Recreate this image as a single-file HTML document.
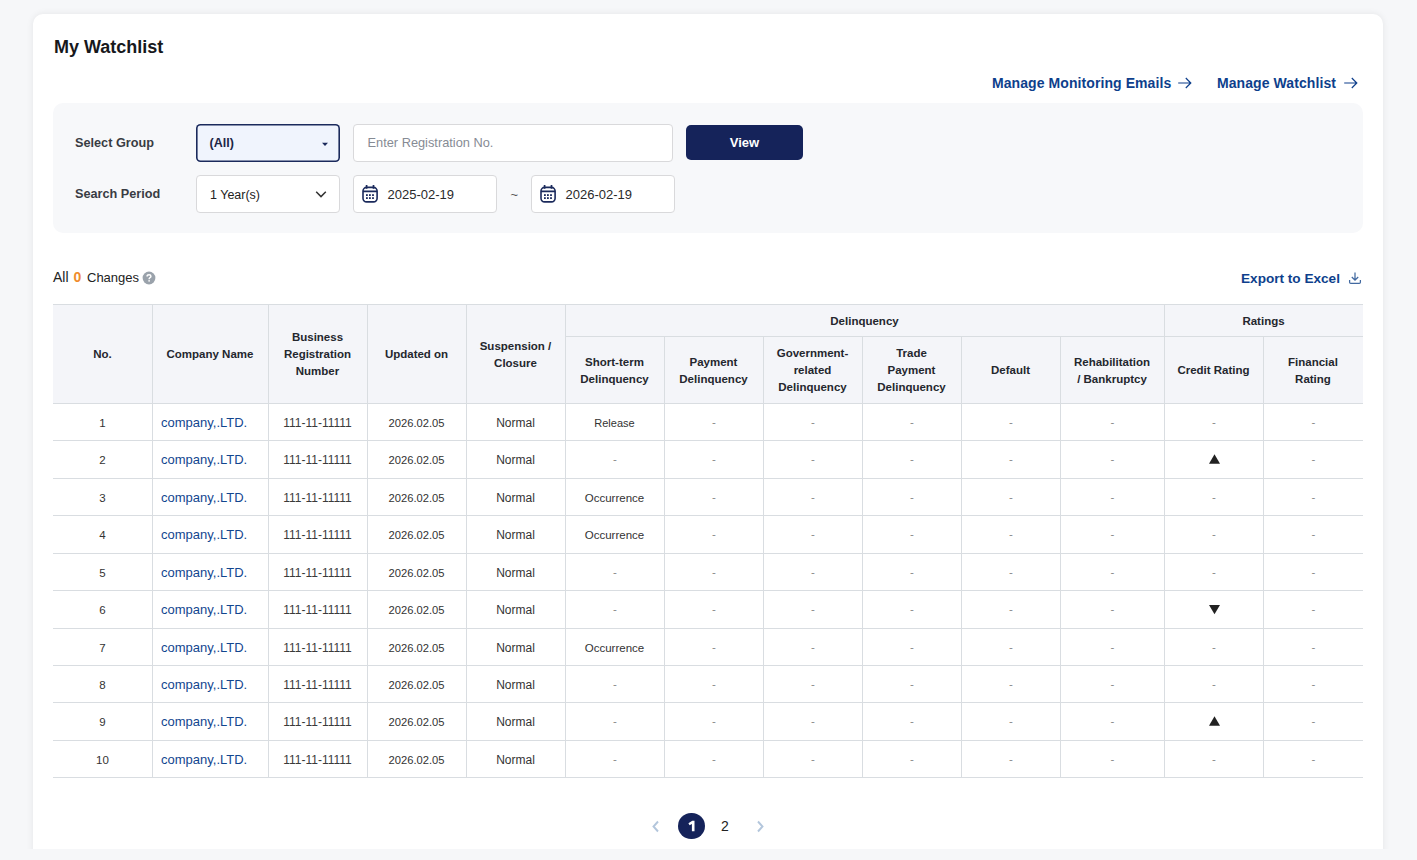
<!DOCTYPE html>
<html><head><meta charset="utf-8"><style>
*{margin:0;padding:0;box-sizing:border-box}
html,body{width:1417px;height:860px;overflow:hidden;background:#f6f7f9;font-family:"Liberation Sans", sans-serif;}
.clip{position:absolute;left:0;top:0;width:1417px;height:849px;overflow:hidden}
.card{position:absolute;left:33px;top:14px;width:1350px;height:900px;background:#fff;border-radius:10px;box-shadow:0 0 7px rgba(0,0,0,0.08)}
.abs{position:absolute;white-space:nowrap}
.panel{position:absolute;left:53px;top:103px;width:1310px;height:130px;background:#f7f8fa;border-radius:10px}
.box{position:absolute;background:#fff;border:1px solid #d9d9db;border-radius:4px}
.sel{position:absolute;background:#f0f4fd;box-shadow:inset 0 0 0 1.6px #1b2a5c;border-radius:4.5px}
.btn{position:absolute;background:#15235a;border-radius:5px}
.hl{position:absolute;height:1px;background:#d9dde1}
.vl{position:absolute;width:1px;background:#d9dde1}
.cell{position:absolute;display:flex;align-items:center;justify-content:center;text-align:center;white-space:nowrap}
.th{font-size:11.5px;font-weight:bold;color:#24272e;line-height:17px;padding-top:2px}
.td{font-size:11.5px;color:#333;line-height:14px;padding-top:2px}
.dash{color:#888;padding-top:0;padding-left:1px}
.co{justify-content:flex-start;padding-left:9px;color:#12468f;font-size:13px}
</style></head><body>
<div class="clip"><div class="card"></div><div class="abs" style="left:54px;top:36.26px;font-size:18px;line-height:23px;color:#17181c;font-weight:bold;">My Watchlist</div><div class="abs" style="left:992px;top:74.15px;font-size:14px;line-height:18px;color:#0e3f8c;font-weight:bold;letter-spacing:0.08px">Manage Monitoring Emails</div><svg class="abs" width="16" height="12" viewBox="0 0 16 12" style="left:1177px;top:77px"><path d="M1.2 6H13.8M8.8 1L13.8 6L8.8 11" fill="none" stroke="#0e3f8c" stroke-width="1.2"/></svg><div class="abs" style="left:1217px;top:74.15px;font-size:14px;line-height:18px;color:#0e3f8c;font-weight:bold;letter-spacing:0.08px">Manage Watchlist</div><svg class="abs" width="16" height="12" viewBox="0 0 16 12" style="left:1343px;top:77px"><path d="M1.2 6H13.8M8.8 1L13.8 6L8.8 11" fill="none" stroke="#0e3f8c" stroke-width="1.2"/></svg><div class="panel"></div><div class="abs" style="left:75px;top:135.10px;font-size:12.7px;line-height:17px;color:#393c43;font-weight:bold;">Select Group</div><div class="abs" style="left:75px;top:185.70px;font-size:12.7px;line-height:17px;color:#393c43;font-weight:bold;">Search Period</div><div class="sel" style="left:196px;top:124px;width:144px;height:38px"></div><div class="abs" style="left:209.5px;top:134.67px;font-size:12.5px;line-height:16px;color:#1d2546;font-weight:bold;">(All)</div><svg class="abs" style="left:321px;top:142px" width="8" height="5" viewBox="0 0 8 5"><path d="M1 0.8H7L4 4Z" fill="#1b2a5c"/></svg><div class="box" style="left:353px;top:124px;width:320px;height:38px"></div><div class="abs" style="left:367.5px;top:134.06px;font-size:12.8px;line-height:17px;color:#868b94;font-weight:normal;">Enter Registration No.</div><div class="btn" style="left:686px;top:125px;width:117px;height:35px"></div><div class="abs" style="left:686px;top:134.30px;font-size:13px;line-height:17px;color:#fff;font-weight:bold;width:117px;text-align:center">View</div><div class="box" style="left:196px;top:175px;width:144px;height:38px"></div><div class="abs" style="left:210px;top:186.97px;font-size:12.5px;line-height:16px;color:#222;font-weight:normal;">1 Year(s)</div><svg class="abs" style="left:315px;top:190px" width="12" height="8" viewBox="0 0 12 8"><path d="M1.2 1.8L6 6.6L10.8 1.8" fill="none" stroke="#333" stroke-width="1.5"/></svg><div class="box" style="left:353px;top:175px;width:144px;height:38px"></div><svg class="abs" style="left:361px;top:184px" width="18" height="20" viewBox="0 0 18 20"><rect x="2" y="3.4" width="14.1" height="14.5" rx="3.6" fill="none" stroke="#1b2a5c" stroke-width="1.6"/><path d="M2 7.4H16.1M5.6 1V4.8M12.5 1V4.8" stroke="#1b2a5c" stroke-width="1.7" fill="none"/><g fill="#1b2a5c"><rect x="5" y="10.2" width="1.8" height="1.8"/><rect x="8" y="10.2" width="1.8" height="1.8"/><rect x="11.1" y="10.2" width="1.8" height="1.8"/><rect x="5" y="13.2" width="1.8" height="1.8"/><rect x="8" y="13.2" width="1.8" height="1.8"/><rect x="11.1" y="13.2" width="1.8" height="1.8"/></g></svg><div class="abs" style="left:387.5px;top:186.20px;font-size:13px;line-height:17px;color:#2a2a2a;font-weight:normal;">2025-02-19</div><div class="abs" style="left:510.5px;top:186.00px;font-size:13px;line-height:17px;color:#555;font-weight:normal;">~</div><div class="box" style="left:531px;top:175px;width:144px;height:38px"></div><svg class="abs" style="left:539px;top:184px" width="18" height="20" viewBox="0 0 18 20"><rect x="2" y="3.4" width="14.1" height="14.5" rx="3.6" fill="none" stroke="#1b2a5c" stroke-width="1.6"/><path d="M2 7.4H16.1M5.6 1V4.8M12.5 1V4.8" stroke="#1b2a5c" stroke-width="1.7" fill="none"/><g fill="#1b2a5c"><rect x="5" y="10.2" width="1.8" height="1.8"/><rect x="8" y="10.2" width="1.8" height="1.8"/><rect x="11.1" y="10.2" width="1.8" height="1.8"/><rect x="5" y="13.2" width="1.8" height="1.8"/><rect x="8" y="13.2" width="1.8" height="1.8"/><rect x="11.1" y="13.2" width="1.8" height="1.8"/></g></svg><div class="abs" style="left:565.5px;top:186.20px;font-size:13px;line-height:17px;color:#2a2a2a;font-weight:normal;">2026-02-19</div><div class="abs" style="left:53px;top:268.15px;font-size:14px;line-height:18px;color:#222;font-weight:normal;">All</div><div class="abs" style="left:73.5px;top:268.15px;font-size:14px;line-height:18px;color:#f08c2c;font-weight:bold;">0</div><div class="abs" style="left:87px;top:269.30px;font-size:13px;line-height:17px;color:#222;font-weight:normal;">Changes</div><svg class="abs" style="left:142px;top:270.5px" width="14" height="14" viewBox="0 0 14 14"><circle cx="7" cy="7" r="6.4" fill="#9aa2ab"/><path d="M5.1 5.4Q5.1 3.8 7.1 3.8Q8.9 3.8 8.9 5.3Q8.9 6.2 8 6.7Q7.1 7.2 7.1 8.2" fill="none" stroke="#fff" stroke-width="1.5"/><circle cx="7.1" cy="9.8" r="0.85" fill="#fff"/></svg><div class="abs" style="left:1241px;top:270.49px;font-size:13.6px;line-height:18px;color:#0e3f8c;font-weight:bold;">Export to Excel</div><svg class="abs" style="left:1348px;top:271px" width="14" height="14" viewBox="0 0 14 14"><path d="M7 1.5V9M3.8 6L7 9.2L10.2 6M1.6 9V11.2Q1.6 12.4 2.8 12.4H11.2Q12.4 12.4 12.4 11.2V9" fill="none" stroke="#4269a0" stroke-width="1.25"/></svg><div class="abs" style="left:53px;top:304px;width:1310px;height:99px;background:#f4f5f9"></div><div class="hl" style="left:53px;top:304px;width:1310px"></div><div class="hl" style="left:53px;top:403px;width:1310px"></div><div class="hl" style="left:53px;top:440px;width:1310px"></div><div class="hl" style="left:53px;top:478px;width:1310px"></div><div class="hl" style="left:53px;top:515px;width:1310px"></div><div class="hl" style="left:53px;top:553px;width:1310px"></div><div class="hl" style="left:53px;top:590px;width:1310px"></div><div class="hl" style="left:53px;top:628px;width:1310px"></div><div class="hl" style="left:53px;top:665px;width:1310px"></div><div class="hl" style="left:53px;top:702px;width:1310px"></div><div class="hl" style="left:53px;top:740px;width:1310px"></div><div class="hl" style="left:53px;top:777px;width:1310px"></div><div class="hl" style="left:565px;top:336px;width:798px"></div><div class="vl" style="left:152px;top:304px;height:473px"></div><div class="vl" style="left:268px;top:304px;height:473px"></div><div class="vl" style="left:367px;top:304px;height:473px"></div><div class="vl" style="left:466px;top:304px;height:473px"></div><div class="vl" style="left:565px;top:304px;height:473px"></div><div class="vl" style="left:664px;top:336px;height:441px"></div><div class="vl" style="left:763px;top:336px;height:441px"></div><div class="vl" style="left:862px;top:336px;height:441px"></div><div class="vl" style="left:961px;top:336px;height:441px"></div><div class="vl" style="left:1060px;top:336px;height:441px"></div><div class="vl" style="left:1164px;top:304px;height:473px"></div><div class="vl" style="left:1263px;top:336px;height:441px"></div><div class="cell th" style="left:53px;top:304px;width:99px;height:99px;">No.</div><div class="cell th" style="left:152px;top:304px;width:116px;height:99px;">Company Name</div><div class="cell th" style="left:268px;top:304px;width:99px;height:99px;">Business<br>Registration<br>Number</div><div class="cell th" style="left:367px;top:304px;width:99px;height:99px;">Updated on</div><div class="cell th" style="left:466px;top:304px;width:99px;height:99px;">Suspension /<br>Closure</div><div class="cell th" style="left:565px;top:304px;width:599px;height:32px;">Delinquency</div><div class="cell th" style="left:1164px;top:304px;width:199px;height:32px;">Ratings</div><div class="cell th" style="left:565px;top:336px;width:99px;height:67px;">Short-term<br>Delinquency</div><div class="cell th" style="left:664px;top:336px;width:99px;height:67px;">Payment<br>Delinquency</div><div class="cell th" style="left:763px;top:336px;width:99px;height:67px;">Government-<br>related<br>Delinquency</div><div class="cell th" style="left:862px;top:336px;width:99px;height:67px;">Trade<br>Payment<br>Delinquency</div><div class="cell th" style="left:961px;top:336px;width:99px;height:67px;">Default</div><div class="cell th" style="left:1060px;top:336px;width:104px;height:67px;">Rehabilitation<br>/ Bankruptcy</div><div class="cell th" style="left:1164px;top:336px;width:99px;height:67px;">Credit Rating</div><div class="cell th" style="left:1263px;top:336px;width:100px;height:67px;">Financial<br>Rating</div><div class="cell td" style="left:53px;top:403px;width:99px;height:37px;">1</div><div class="cell td co" style="left:152px;top:403px;width:116px;height:37px;">company,.LTD.</div><div class="cell td" style="left:268px;top:403px;width:99px;height:37px;font-size:12px;color:#3a3a3a">111-11-11111</div><div class="cell td" style="left:367px;top:403px;width:99px;height:37px;font-size:11.2px">2026.02.05</div><div class="cell td" style="left:466px;top:403px;width:99px;height:37px;font-size:12px">Normal</div><div class="cell td" style="left:565px;top:403px;width:99px;height:37px;font-size:11px">Release</div><div class="cell td dash" style="left:664px;top:403px;width:99px;height:37px;">-</div><div class="cell td dash" style="left:763px;top:403px;width:99px;height:37px;">-</div><div class="cell td dash" style="left:862px;top:403px;width:99px;height:37px;">-</div><div class="cell td dash" style="left:961px;top:403px;width:99px;height:37px;">-</div><div class="cell td dash" style="left:1060px;top:403px;width:104px;height:37px;">-</div><div class="cell td dash" style="left:1164px;top:403px;width:99px;height:37px;">-</div><div class="cell td dash" style="left:1263px;top:403px;width:100px;height:37px;">-</div><div class="cell td" style="left:53px;top:440px;width:99px;height:38px;">2</div><div class="cell td co" style="left:152px;top:440px;width:116px;height:38px;">company,.LTD.</div><div class="cell td" style="left:268px;top:440px;width:99px;height:38px;font-size:12px;color:#3a3a3a">111-11-11111</div><div class="cell td" style="left:367px;top:440px;width:99px;height:38px;font-size:11.2px">2026.02.05</div><div class="cell td" style="left:466px;top:440px;width:99px;height:38px;font-size:12px">Normal</div><div class="cell td dash" style="left:565px;top:440px;width:99px;height:38px;">-</div><div class="cell td dash" style="left:664px;top:440px;width:99px;height:38px;">-</div><div class="cell td dash" style="left:763px;top:440px;width:99px;height:38px;">-</div><div class="cell td dash" style="left:862px;top:440px;width:99px;height:38px;">-</div><div class="cell td dash" style="left:961px;top:440px;width:99px;height:38px;">-</div><div class="cell td dash" style="left:1060px;top:440px;width:104px;height:38px;">-</div><svg class="abs" style="left:0;top:0" width="1417" height="860"><polygon points="1209,463.8 1220,463.8 1214.5,454.2" fill="#222"/></svg><div class="cell td dash" style="left:1263px;top:440px;width:100px;height:38px;">-</div><div class="cell td" style="left:53px;top:478px;width:99px;height:37px;">3</div><div class="cell td co" style="left:152px;top:478px;width:116px;height:37px;">company,.LTD.</div><div class="cell td" style="left:268px;top:478px;width:99px;height:37px;font-size:12px;color:#3a3a3a">111-11-11111</div><div class="cell td" style="left:367px;top:478px;width:99px;height:37px;font-size:11.2px">2026.02.05</div><div class="cell td" style="left:466px;top:478px;width:99px;height:37px;font-size:12px">Normal</div><div class="cell td" style="left:565px;top:478px;width:99px;height:37px;font-size:11.5px">Occurrence</div><div class="cell td dash" style="left:664px;top:478px;width:99px;height:37px;">-</div><div class="cell td dash" style="left:763px;top:478px;width:99px;height:37px;">-</div><div class="cell td dash" style="left:862px;top:478px;width:99px;height:37px;">-</div><div class="cell td dash" style="left:961px;top:478px;width:99px;height:37px;">-</div><div class="cell td dash" style="left:1060px;top:478px;width:104px;height:37px;">-</div><div class="cell td dash" style="left:1164px;top:478px;width:99px;height:37px;">-</div><div class="cell td dash" style="left:1263px;top:478px;width:100px;height:37px;">-</div><div class="cell td" style="left:53px;top:515px;width:99px;height:38px;">4</div><div class="cell td co" style="left:152px;top:515px;width:116px;height:38px;">company,.LTD.</div><div class="cell td" style="left:268px;top:515px;width:99px;height:38px;font-size:12px;color:#3a3a3a">111-11-11111</div><div class="cell td" style="left:367px;top:515px;width:99px;height:38px;font-size:11.2px">2026.02.05</div><div class="cell td" style="left:466px;top:515px;width:99px;height:38px;font-size:12px">Normal</div><div class="cell td" style="left:565px;top:515px;width:99px;height:38px;font-size:11.5px">Occurrence</div><div class="cell td dash" style="left:664px;top:515px;width:99px;height:38px;">-</div><div class="cell td dash" style="left:763px;top:515px;width:99px;height:38px;">-</div><div class="cell td dash" style="left:862px;top:515px;width:99px;height:38px;">-</div><div class="cell td dash" style="left:961px;top:515px;width:99px;height:38px;">-</div><div class="cell td dash" style="left:1060px;top:515px;width:104px;height:38px;">-</div><div class="cell td dash" style="left:1164px;top:515px;width:99px;height:38px;">-</div><div class="cell td dash" style="left:1263px;top:515px;width:100px;height:38px;">-</div><div class="cell td" style="left:53px;top:553px;width:99px;height:37px;">5</div><div class="cell td co" style="left:152px;top:553px;width:116px;height:37px;">company,.LTD.</div><div class="cell td" style="left:268px;top:553px;width:99px;height:37px;font-size:12px;color:#3a3a3a">111-11-11111</div><div class="cell td" style="left:367px;top:553px;width:99px;height:37px;font-size:11.2px">2026.02.05</div><div class="cell td" style="left:466px;top:553px;width:99px;height:37px;font-size:12px">Normal</div><div class="cell td dash" style="left:565px;top:553px;width:99px;height:37px;">-</div><div class="cell td dash" style="left:664px;top:553px;width:99px;height:37px;">-</div><div class="cell td dash" style="left:763px;top:553px;width:99px;height:37px;">-</div><div class="cell td dash" style="left:862px;top:553px;width:99px;height:37px;">-</div><div class="cell td dash" style="left:961px;top:553px;width:99px;height:37px;">-</div><div class="cell td dash" style="left:1060px;top:553px;width:104px;height:37px;">-</div><div class="cell td dash" style="left:1164px;top:553px;width:99px;height:37px;">-</div><div class="cell td dash" style="left:1263px;top:553px;width:100px;height:37px;">-</div><div class="cell td" style="left:53px;top:590px;width:99px;height:38px;">6</div><div class="cell td co" style="left:152px;top:590px;width:116px;height:38px;">company,.LTD.</div><div class="cell td" style="left:268px;top:590px;width:99px;height:38px;font-size:12px;color:#3a3a3a">111-11-11111</div><div class="cell td" style="left:367px;top:590px;width:99px;height:38px;font-size:11.2px">2026.02.05</div><div class="cell td" style="left:466px;top:590px;width:99px;height:38px;font-size:12px">Normal</div><div class="cell td dash" style="left:565px;top:590px;width:99px;height:38px;">-</div><div class="cell td dash" style="left:664px;top:590px;width:99px;height:38px;">-</div><div class="cell td dash" style="left:763px;top:590px;width:99px;height:38px;">-</div><div class="cell td dash" style="left:862px;top:590px;width:99px;height:38px;">-</div><div class="cell td dash" style="left:961px;top:590px;width:99px;height:38px;">-</div><div class="cell td dash" style="left:1060px;top:590px;width:104px;height:38px;">-</div><svg class="abs" style="left:0;top:0" width="1417" height="860"><polygon points="1209,604.9 1220,604.9 1214.5,614.3" fill="#222"/></svg><div class="cell td dash" style="left:1263px;top:590px;width:100px;height:38px;">-</div><div class="cell td" style="left:53px;top:628px;width:99px;height:37px;">7</div><div class="cell td co" style="left:152px;top:628px;width:116px;height:37px;">company,.LTD.</div><div class="cell td" style="left:268px;top:628px;width:99px;height:37px;font-size:12px;color:#3a3a3a">111-11-11111</div><div class="cell td" style="left:367px;top:628px;width:99px;height:37px;font-size:11.2px">2026.02.05</div><div class="cell td" style="left:466px;top:628px;width:99px;height:37px;font-size:12px">Normal</div><div class="cell td" style="left:565px;top:628px;width:99px;height:37px;font-size:11.5px">Occurrence</div><div class="cell td dash" style="left:664px;top:628px;width:99px;height:37px;">-</div><div class="cell td dash" style="left:763px;top:628px;width:99px;height:37px;">-</div><div class="cell td dash" style="left:862px;top:628px;width:99px;height:37px;">-</div><div class="cell td dash" style="left:961px;top:628px;width:99px;height:37px;">-</div><div class="cell td dash" style="left:1060px;top:628px;width:104px;height:37px;">-</div><div class="cell td dash" style="left:1164px;top:628px;width:99px;height:37px;">-</div><div class="cell td dash" style="left:1263px;top:628px;width:100px;height:37px;">-</div><div class="cell td" style="left:53px;top:665px;width:99px;height:37px;">8</div><div class="cell td co" style="left:152px;top:665px;width:116px;height:37px;">company,.LTD.</div><div class="cell td" style="left:268px;top:665px;width:99px;height:37px;font-size:12px;color:#3a3a3a">111-11-11111</div><div class="cell td" style="left:367px;top:665px;width:99px;height:37px;font-size:11.2px">2026.02.05</div><div class="cell td" style="left:466px;top:665px;width:99px;height:37px;font-size:12px">Normal</div><div class="cell td dash" style="left:565px;top:665px;width:99px;height:37px;">-</div><div class="cell td dash" style="left:664px;top:665px;width:99px;height:37px;">-</div><div class="cell td dash" style="left:763px;top:665px;width:99px;height:37px;">-</div><div class="cell td dash" style="left:862px;top:665px;width:99px;height:37px;">-</div><div class="cell td dash" style="left:961px;top:665px;width:99px;height:37px;">-</div><div class="cell td dash" style="left:1060px;top:665px;width:104px;height:37px;">-</div><div class="cell td dash" style="left:1164px;top:665px;width:99px;height:37px;">-</div><div class="cell td dash" style="left:1263px;top:665px;width:100px;height:37px;">-</div><div class="cell td" style="left:53px;top:702px;width:99px;height:38px;">9</div><div class="cell td co" style="left:152px;top:702px;width:116px;height:38px;">company,.LTD.</div><div class="cell td" style="left:268px;top:702px;width:99px;height:38px;font-size:12px;color:#3a3a3a">111-11-11111</div><div class="cell td" style="left:367px;top:702px;width:99px;height:38px;font-size:11.2px">2026.02.05</div><div class="cell td" style="left:466px;top:702px;width:99px;height:38px;font-size:12px">Normal</div><div class="cell td dash" style="left:565px;top:702px;width:99px;height:38px;">-</div><div class="cell td dash" style="left:664px;top:702px;width:99px;height:38px;">-</div><div class="cell td dash" style="left:763px;top:702px;width:99px;height:38px;">-</div><div class="cell td dash" style="left:862px;top:702px;width:99px;height:38px;">-</div><div class="cell td dash" style="left:961px;top:702px;width:99px;height:38px;">-</div><div class="cell td dash" style="left:1060px;top:702px;width:104px;height:38px;">-</div><svg class="abs" style="left:0;top:0" width="1417" height="860"><polygon points="1209,725.8 1220,725.8 1214.5,716.2" fill="#222"/></svg><div class="cell td dash" style="left:1263px;top:702px;width:100px;height:38px;">-</div><div class="cell td" style="left:53px;top:740px;width:99px;height:37px;">10</div><div class="cell td co" style="left:152px;top:740px;width:116px;height:37px;">company,.LTD.</div><div class="cell td" style="left:268px;top:740px;width:99px;height:37px;font-size:12px;color:#3a3a3a">111-11-11111</div><div class="cell td" style="left:367px;top:740px;width:99px;height:37px;font-size:11.2px">2026.02.05</div><div class="cell td" style="left:466px;top:740px;width:99px;height:37px;font-size:12px">Normal</div><div class="cell td dash" style="left:565px;top:740px;width:99px;height:37px;">-</div><div class="cell td dash" style="left:664px;top:740px;width:99px;height:37px;">-</div><div class="cell td dash" style="left:763px;top:740px;width:99px;height:37px;">-</div><div class="cell td dash" style="left:862px;top:740px;width:99px;height:37px;">-</div><div class="cell td dash" style="left:961px;top:740px;width:99px;height:37px;">-</div><div class="cell td dash" style="left:1060px;top:740px;width:104px;height:37px;">-</div><div class="cell td dash" style="left:1164px;top:740px;width:99px;height:37px;">-</div><div class="cell td dash" style="left:1263px;top:740px;width:100px;height:37px;">-</div><svg class="abs" style="left:651px;top:820px" width="9" height="13" viewBox="0 0 9 13"><path d="M7 1.5L2.5 6.5L7 11.5" fill="none" stroke="#b3c6dc" stroke-width="1.9"/></svg><div class="abs" style="left:678.1px;top:812.9px;width:26.6px;height:26.3px;border-radius:50%;background:#15235a"></div><svg class="abs" style="left:0;top:0" width="1417" height="860"><path d="M688.4 823.2L692.3 820.7H694.5V831.3H691.9V823.9L689.6 825.3Z" fill="#fff"/></svg><div class="abs" style="left:718px;top:817.45px;font-size:14px;line-height:18px;color:#222;font-weight:normal;width:14px;text-align:center">2</div><svg class="abs" style="left:756px;top:820px" width="9" height="13" viewBox="0 0 9 13"><path d="M2 1.5L6.5 6.5L2 11.5" fill="none" stroke="#b3c6dc" stroke-width="1.9"/></svg></div>
</body></html>
